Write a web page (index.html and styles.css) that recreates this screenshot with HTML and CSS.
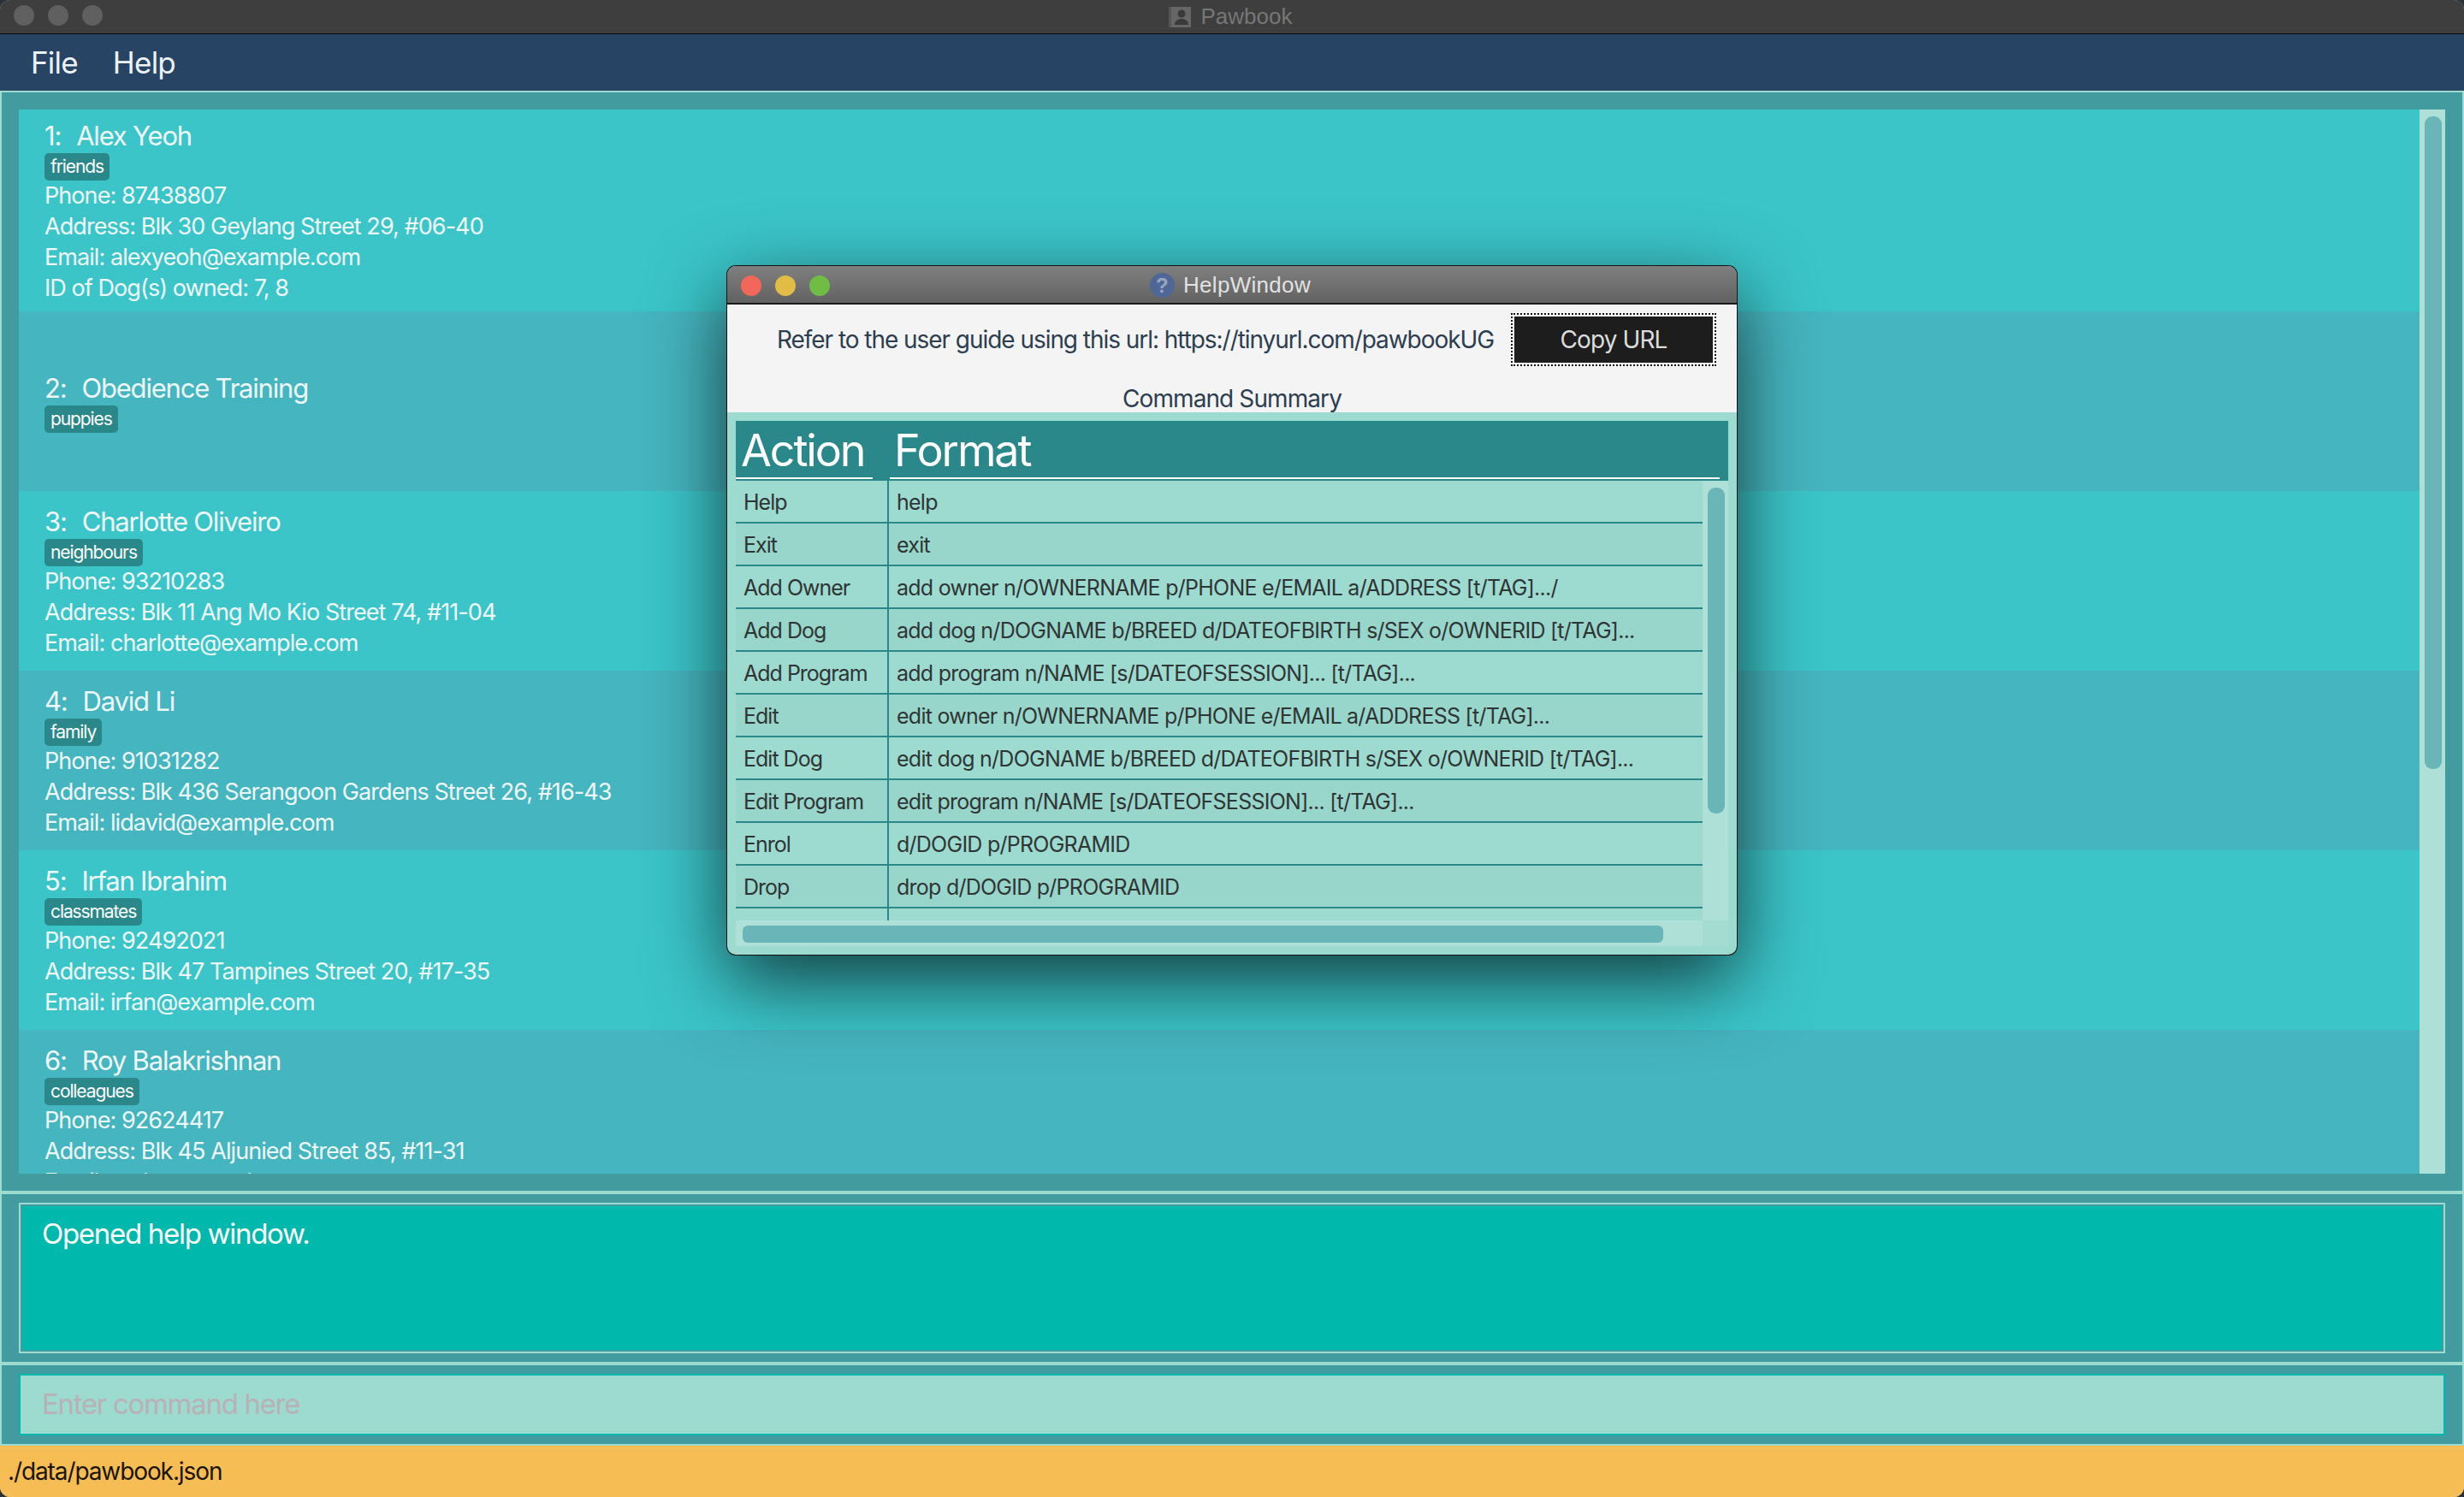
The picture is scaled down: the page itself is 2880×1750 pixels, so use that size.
FILE: index.html
```html
<!DOCTYPE html>
<html lang="en">
<head>
<meta charset="utf-8">
<title>Pawbook</title>
<link rel="stylesheet" href="styles.css">
</head>
<body>
<div class="app">
  <header class="titlebar">
    <div class="lights">
      <span class="light"></span><span class="light"></span><span class="light"></span>
    </div>
    <div class="app-title">
      <svg class="doc-icon" width="26" height="24" viewBox="0 0 26 24"><rect width="26" height="24" fill="#666"/><rect width="3" height="24" fill="#555"/><circle cx="15" cy="8" r="4.5" fill="#3a3a3a"/><path d="M7 21c0-5 4-6 6-7h4c2 1 6 2 6 7z" fill="#3a3a3a"/></svg>
      <span>Pawbook</span>
    </div>
  </header>
  <nav class="menubar"><span>File</span><span>Help</span></nav>
  <section class="panel list-panel">
    <div class="list">
      <div class="rows">
        <article class="row">
          <div class="name"><span class="idx">1:</span>Alex Yeoh</div>
          <div class="tags"><span class="tag">friends</span></div>
          <div class="line">Phone: 87438807</div>
          <div class="line">Address: Blk 30 Geylang Street 29, #06-40</div>
          <div class="line">Email: alexyeoh@example.com</div>
          <div class="line">ID of Dog(s) owned: 7, 8</div>
        </article>
        <article class="row alt">
          <div class="name"><span class="idx">2:</span>Obedience Training</div>
          <div class="tags"><span class="tag">puppies</span></div>
        </article>
        <article class="row">
          <div class="name"><span class="idx">3:</span>Charlotte Oliveiro</div>
          <div class="tags"><span class="tag">neighbours</span></div>
          <div class="line">Phone: 93210283</div>
          <div class="line">Address: Blk 11 Ang Mo Kio Street 74, #11-04</div>
          <div class="line">Email: charlotte@example.com</div>
        </article>
        <article class="row alt">
          <div class="name"><span class="idx">4:</span>David Li</div>
          <div class="tags"><span class="tag">family</span></div>
          <div class="line">Phone: 91031282</div>
          <div class="line">Address: Blk 436 Serangoon Gardens Street 26, #16-43</div>
          <div class="line">Email: lidavid@example.com</div>
        </article>
        <article class="row">
          <div class="name"><span class="idx">5:</span>Irfan Ibrahim</div>
          <div class="tags"><span class="tag">classmates</span></div>
          <div class="line">Phone: 92492021</div>
          <div class="line">Address: Blk 47 Tampines Street 20, #17-35</div>
          <div class="line">Email: irfan@example.com</div>
        </article>
        <article class="row alt">
          <div class="name"><span class="idx">6:</span>Roy Balakrishnan</div>
          <div class="tags"><span class="tag">colleagues</span></div>
          <div class="line">Phone: 92624417</div>
          <div class="line">Address: Blk 45 Aljunied Street 85, #11-31</div>
          <div class="line">Email: royb@example.com</div>
        </article>
      </div>
      <div class="vscroll"><div class="vthumb list-thumb"></div></div>
    </div>
  </section>
  <section class="panel result-panel">
    <div class="result">Opened help window.</div>
  </section>
  <section class="panel input-panel">
    <div class="command">Enter command here</div>
  </section>
  <footer class="status">./data/pawbook.json</footer>
</div>

<div class="help">
  <header class="help-bar">
    <div class="lights help-lights">
      <span class="light red"></span><span class="light yellow"></span><span class="light green"></span>
    </div>
    <div class="help-title">
      <svg width="29" height="29" viewBox="0 0 29 29"><circle cx="14.5" cy="14.5" r="14.5" fill="#4f6797"/><text x="14.5" y="23" text-anchor="middle" class="q">?</text></svg>
      <span>HelpWindow</span>
    </div>
  </header>
  <div class="help-top">
    <div class="guide">
      <span class="guide-text">Refer to the user guide using this url: https://tinyurl.com/pawbookUG</span>
      <span class="copy"><span class="copy-inner">Copy URL</span></span>
    </div>
    <div class="summary">Command Summary</div>
  </div>
  <div class="table-wrap">
    <div class="table">
      <div class="thead"><div class="th th-action">Action</div><div class="th th-format">Format</div></div>
      <div class="tbody">
        <div class="trows">
          <div class="tr"><div class="td td1">Help</div><div class="td">help</div></div>
          <div class="tr alt2"><div class="td td1">Exit</div><div class="td">exit</div></div>
          <div class="tr"><div class="td td1">Add Owner</div><div class="td">add owner n/OWNERNAME p/PHONE e/EMAIL a/ADDRESS [t/TAG].../</div></div>
          <div class="tr alt2"><div class="td td1">Add Dog</div><div class="td">add dog n/DOGNAME b/BREED d/DATEOFBIRTH s/SEX o/OWNERID [t/TAG]...</div></div>
          <div class="tr"><div class="td td1">Add Program</div><div class="td">add program n/NAME [s/DATEOFSESSION]... [t/TAG]...</div></div>
          <div class="tr alt2"><div class="td td1">Edit</div><div class="td">edit owner n/OWNERNAME p/PHONE e/EMAIL a/ADDRESS [t/TAG]...</div></div>
          <div class="tr"><div class="td td1">Edit Dog</div><div class="td">edit dog n/DOGNAME b/BREED d/DATEOFBIRTH s/SEX o/OWNERID [t/TAG]...</div></div>
          <div class="tr alt2"><div class="td td1">Edit Program</div><div class="td">edit program n/NAME [s/DATEOFSESSION]... [t/TAG]...</div></div>
          <div class="tr"><div class="td td1">Enrol</div><div class="td">d/DOGID p/PROGRAMID</div></div>
          <div class="tr alt2"><div class="td td1">Drop</div><div class="td">drop d/DOGID p/PROGRAMID</div></div>
          <div class="tr"><div class="td td1"></div><div class="td"></div></div>
        </div>
        <div class="vscroll"><div class="vthumb table-thumb"></div></div>
      </div>
      <div class="hscroll-row">
        <div class="hscroll"><div class="hthumb"></div></div>
        <div class="corner"></div>
      </div>
    </div>
  </div>
</div>
</body>
</html>
```
FILE: styles.css
```css
* { box-sizing: border-box; }
html, body { margin: 0; height: 100%; }
body { background: #2b3038; font-family: Inter, "Liberation Sans", sans-serif; overflow: hidden; }

.app { width: 2880px; height: 1750px; display: flex; flex-direction: column; border-radius: 12px; overflow: hidden; background: #9ddacf; }

.titlebar { height: 40px; flex: none; background: #3d3e3d; border-bottom: 1px solid #0c0c0c; position: relative; display: flex; align-items: center; justify-content: center; }
.lights { display: flex; gap: 16px; position: absolute; left: 16px; top: 6px; }
.light { width: 24px; height: 24px; border-radius: 50%; background: #5f605f; }
.app-title { display: flex; align-items: center; gap: 12px; color: #777; font-family: "Liberation Sans", sans-serif; font-size: 26px; margin-left: -4px; }
.doc-icon { display: block; }

.menubar { height: 66px; flex: none; background: #284465; color: #eef2f5; display: flex; align-items: center; gap: 41px; padding: 0 0 0 36px; font-size: 35px; letter-spacing: -.8px; }

.panel { background: #429b9e; flex: none; border-top: 2px solid #9ddacf; margin: 0 2px; }
.list-panel { height: 1286px; padding: 20px; }
.list { height: 1244px; display: flex; overflow: hidden; }
.rows { width: 2806px; flex: none; overflow: hidden; }
.row { min-height: 210px; padding: 13px 0 9px 30px; background: #3bc5c9; display: flex; flex-direction: column; justify-content: center; color: #eff8f8; }
.row.alt { background: #45b5bf; }
.name { font-size: 31px; line-height: 36px; letter-spacing: -1.2px; margin-bottom: 2px; }
.idx { margin-right: 18px; }
.tags { display: flex; height: 32px; }
.tag { background: #2b888a; color: #fff; font-size: 21px; line-height: 32px; padding: 0 7px; border-radius: 5px; letter-spacing: -1.1px; }
.line { font-size: 27px; line-height: 36px; letter-spacing: -.93px; }

.vscroll { flex: none; width: 30px; background: #aee0d8; padding: 8px 4px 0 6px; }
.vthumb { width: 20px; background: #6ab5b8; border-radius: 9px; }
.list-thumb { height: 763px; }

.result-panel { height: 200px; padding: 10px 20px; border-top-width: 4px; }
.result { height: 176px; border: 2px solid #9ddacf; background: #00b8ab; box-shadow: inset 0 0 0 2px #429b9e; color: #fff; font-size: 33px; line-height: 42px; padding: 13px 0 0 25px; letter-spacing: -1.3px; }

.input-panel { height: 96px; padding: 10px 20px; border-top-width: 4px; }
.command { height: 72px; border: 2px solid #00b8ab; background: #9ddacf; color: #b8b2b6; font-size: 33px; line-height: 66px; padding-left: 25px; letter-spacing: -1.3px; }

.status { flex: 1; margin-top: 2px; background: #f5bd54; color: #1b1408; font-size: 28px; line-height: 60px; padding-left: 9px; letter-spacing: -1.1px; border-bottom: 2px solid #f3c877; }

.help { position: absolute; left: 850px; top: 311px; width: 1180px; height: 805px; border-radius: 10px; overflow: hidden; background: #9ddacf; display: flex; flex-direction: column; box-shadow: 0 0 0 1px #111, 0 30px 90px rgba(0, 0, 0, .7); }
.help-bar { height: 45px; flex: none; background: linear-gradient(#7f7f7f, #626262); border-bottom: 2px solid #1a1a1a; position: relative; display: flex; justify-content: center; align-items: center; }
.help-lights { left: 16px; top: 11px; }
.red { background: #f3665a; }
.yellow { background: #e2bd45; }
.green { background: #6fbd45; }
.help-title { display: flex; align-items: center; gap: 10px; color: #e2e2e2; font-family: "Liberation Sans", sans-serif; font-size: 26px; letter-spacing: .3px; margin: 2px 0 0 -4px; }
.help-title svg { display: block; }
.q { font-size: 24px; font-weight: 700; fill: #9aa6c0; font-family: "Liberation Sans", sans-serif; }

.help-top { height: 126px; flex: none; background: #f4f4f4; color: #2c3e50; }
.guide { display: flex; align-items: center; justify-content: space-between; height: 72px; padding: 10px 24px 0 58px; }
.guide-text { font-size: 28px; letter-spacing: -1.05px; white-space: nowrap; }
.copy { width: 240px; height: 62px; flex: none; border: 2px dotted #111; background: #f8f8f8; padding: 2px; }
.copy-inner { display: flex; height: 100%; align-items: center; justify-content: center; background: #1d1d1d; color: #dcdcdc; font-size: 28px; letter-spacing: -.9px; }
.summary { text-align: center; font-size: 28px; line-height: 36px; margin-top: 20px; letter-spacing: -.9px; }

.table-wrap { flex: 1; padding: 10px; min-height: 0; }
.table { height: 100%; display: flex; flex-direction: column; overflow: hidden; }
.thead { height: 70px; flex: none; background: #2b888a; color: #fff; display: flex; padding-bottom: 2px; font-size: 52px; letter-spacing: -2.1px; }
.th { border-bottom: 2px solid #fff; height: 68px; line-height: 62px; padding: 4px 0 0 6px; }
.th-action { width: 160px; margin-right: 20px; }
.th-format { width: 970px; padding-left: 5px; }

.tbody { height: 514px; flex: none; display: flex; overflow: hidden; }
.trows { flex: 1; min-width: 0; }
.tr { height: 50px; display: flex; background: #9ddacf; border-bottom: 2px solid #2b888a; color: #2f3535; font-size: 25px; letter-spacing: -.75px; line-height: 50px; }
.tr.alt2 { background: #98d5ca; }
.td { padding-left: 9px; white-space: nowrap; }
.td1 { width: 179px; flex: none; border-right: 2px solid #2b888a; letter-spacing: -1px; }
.table-thumb { height: 381px; }
.hscroll-row { flex: 1; display: flex; }
.hscroll { flex: 1; background: #aee0d8; padding: 6px 0 4px 8px; }
.hthumb { width: 1076px; height: 20px; background: #6ab5b8; border-radius: 6px; }
.corner { width: 30px; background: #a4dcd1; }
```
